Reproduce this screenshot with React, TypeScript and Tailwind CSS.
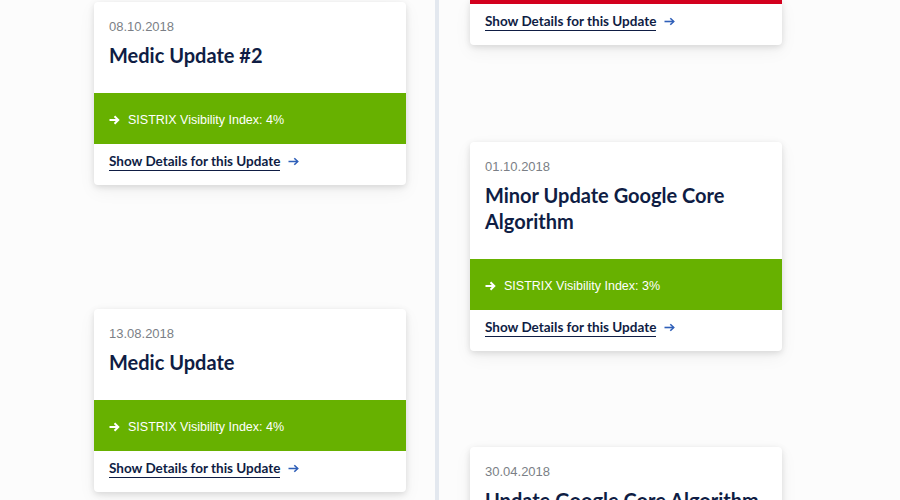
import React from "react";

type CardProps = {
  date: string;
  title: React.ReactNode;
  value: string;
  className?: string;
};

const titleFont = { fontFamily: "Lato, 'Noto Sans', sans-serif" };
const shadow =
  "shadow-[0_2px_6px_rgba(0,0,0,0.12),0_6px_18px_rgba(0,0,0,0.05)]";

function BandArrow() {
  return (
    <svg width="11" height="10" viewBox="0 0 11 10" className="shrink-0">
      <path d="M0.5 5 H8.5" stroke="white" strokeWidth="2" />
      <path d="M5.5 1.2 L9.3 5 L5.5 8.8" stroke="white" strokeWidth="2" fill="none" />
    </svg>
  );
}

function LinkArrow() {
  return (
    <svg width="11" height="9" viewBox="0 0 11 9" className="shrink-0">
      <path d="M0.5 4.5 H9.5" stroke="#2f5fb8" strokeWidth="1.6" />
      <path d="M6.3 1.2 L9.7 4.5 L6.3 7.8" stroke="#2f5fb8" strokeWidth="1.6" fill="none" />
    </svg>
  );
}

function DetailsLink() {
  return (
    <div className="px-[15px] pt-[8px] pb-[14px] flex items-center gap-[8px]">
      <span
        className="text-[13.5px] leading-[18px] font-bold text-[#0f1d44] border-b border-[#0f1d44]"
        style={titleFont}
      >
        Show Details for this Update
      </span>
      <LinkArrow />
    </div>
  );
}

function Card({ date, title, value, className = "" }: CardProps) {
  return (
    <div className={`shrink-0 w-[312px] bg-white rounded-[4px] ${shadow} overflow-hidden ${className}`}>
      <div className="px-[15px] pt-[17px]">
        <div
          className="text-[13px] leading-[16px] text-[#7b7f86]"
          style={{ fontFamily: "'Liberation Sans', Arial, sans-serif" }}
        >
          {date}
        </div>
        <div className="mt-[7px] text-[20px] leading-[26px] font-bold text-[#0f1d44]" style={titleFont}>
          {title}
        </div>
      </div>
      <div
        className="mt-[25px] h-[51px] flex items-center gap-[8px] px-[15px] pt-[3px] text-white text-[12.5px] bg-[#67b100]"
        style={{ fontFamily: "'Liberation Sans', Arial, sans-serif" }}
      >
        <BandArrow />
        <span>{value}</span>
      </div>
      <DetailsLink />
    </div>
  );
}

export default function App() {
  return (
    <div className="w-[900px] h-[500px] overflow-hidden bg-[#fcfcfc] flex">
      <div className="pl-[94px] pt-[2px] flex flex-col">
        <Card date="08.10.2018" title="Medic Update #2" value="SISTRIX Visibility Index: 4%" />
        <Card className="mt-[124px]" date="13.08.2018" title="Medic Update" value="SISTRIX Visibility Index: 4%" />
      </div>
      <div className="shrink-0 ml-[29px] w-[4px] h-[500px] bg-[#e3e8ef]" />
      <div className="ml-[31px] flex flex-col">
        <div className={`shrink-0 w-[312px] bg-white rounded-b-[4px] ${shadow} overflow-hidden`}>
          <div className="h-[4px] bg-[#d3001e]" />
          <DetailsLink />
        </div>
        <Card
          className="mt-[97px]"
          date="01.10.2018"
          title={
            <>
              Minor Update Google Core
              <br />
              Algorithm
            </>
          }
          value="SISTRIX Visibility Index: 3%"
        />
        <Card
          className="mt-[96px]"
          date="30.04.2018"
          title="Update Google Core Algorithm"
          value="SISTRIX Visibility Index: 2%"
        />
      </div>
    </div>
  );
}
